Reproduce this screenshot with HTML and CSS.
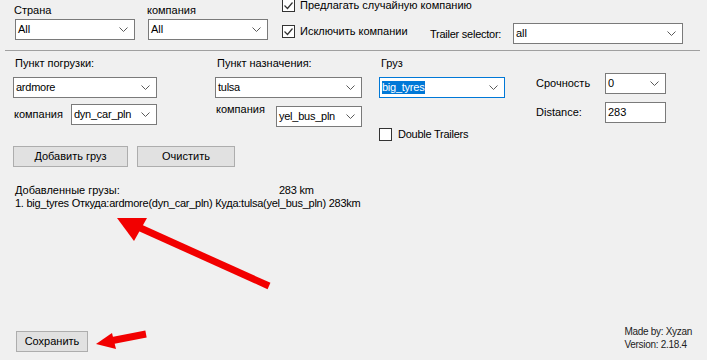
FILE: index.html
```html
<!DOCTYPE html>
<html lang="ru">
<head>
    <meta charset="UTF-8">
    <title>Cargo editor</title>
    <link rel="stylesheet" href="styles.css">
</head>
<body>
    <div class="form">
        <!-- Filters -->
        <div class="filters">
            <div class="field field-country">
                <span class="label">Страна</span>
                <div class="combo w120"><span class="value">All</span><svg class="chevron" width="9" height="5"><polyline points="0.5,0.5 4.5,4.5 8.5,0.5"/></svg></div>
            </div>
            <div class="field field-company">
                <span class="label">компания</span>
                <div class="combo w120"><span class="value">All</span><svg class="chevron" width="9" height="5"><polyline points="0.5,0.5 4.5,4.5 8.5,0.5"/></svg></div>
            </div>
            <div class="options">
                <div class="check check-random"><span class="box"><svg width="11" height="11"><polyline points="1.5,5.5 4.5,8.5 9.5,2.5"/></svg></span>Предлагать случайную компанию</div>
                <div class="options-row">
                    <div class="check check-exclude"><span class="box"><svg width="11" height="11"><polyline points="1.5,5.5 4.5,8.5 9.5,2.5"/></svg></span>Исключить компании</div>
                    <span class="label trailer-label lat">Trailer selector:</span>
                    <div class="combo w170"><span class="value">all</span><svg class="chevron" width="9" height="5"><polyline points="0.5,0.5 4.5,4.5 8.5,0.5"/></svg></div>
                </div>
            </div>
        </div>

        <div class="separator"></div>

        <!-- Cargo -->
        <div class="cargo">
            <div class="route route-from">
                <span class="label">Пункт погрузки:</span>
                <div class="combo w144"><span class="value lat">ardmore</span><svg class="chevron" width="9" height="5"><polyline points="0.5,0.5 4.5,4.5 8.5,0.5"/></svg></div>
                <div class="company-row">
                    <span class="label">компания</span>
                    <div class="combo w86"><span class="value lat">dyn_car_pln</span><svg class="chevron" width="9" height="5"><polyline points="0.5,0.5 4.5,4.5 8.5,0.5"/></svg></div>
                </div>
            </div>
            <div class="route route-to">
                <span class="label">Пункт назначения:</span>
                <div class="combo w147"><span class="value lat">tulsa</span><svg class="chevron" width="9" height="5"><polyline points="0.5,0.5 4.5,4.5 8.5,0.5"/></svg></div>
                <div class="company-row company-row-to">
                    <span class="label">компания</span>
                    <div class="combo w86"><span class="value lat">yel_bus_pln</span><svg class="chevron" width="9" height="5"><polyline points="0.5,0.5 4.5,4.5 8.5,0.5"/></svg></div>
                </div>
            </div>
            <div class="goods">
                <span class="label">Груз</span>
                <div class="combo combo-focus w126"><span class="value selected lat">big_tyres</span><svg class="chevron" width="9" height="5"><polyline points="0.5,0.5 4.5,4.5 8.5,0.5"/></svg></div>
                <div class="check check-empty lat"><span class="box"></span>Double Trailers</div>
            </div>
            <div class="params">
                <span class="label">Срочность</span>
                <div class="combo w61"><span class="value">0</span><svg class="chevron" width="9" height="5"><polyline points="0.5,0.5 4.5,4.5 8.5,0.5"/></svg></div>
                <span class="label">Distance:</span>
                <div class="textbox w61">283</div>
            </div>
        </div>

        <div class="actions">
            <button class="btn btn-add">Добавить груз</button>
            <button class="btn btn-clear">Очистить</button>
        </div>

        <div class="summary">
            <div class="summary-head"><span class="summary-title">Добавленные грузы:</span><span class="lat">283 km</span></div>
            <div class="lat">1. big_tyres Откуда:ardmore(dyn_car_pln) Куда:tulsa(yel_bus_pln) 283km</div>
        </div>

        <div class="footer">
            <button class="btn btn-save">Сохранить</button>
            <div class="credits">
                <div>Made by: Xyzan</div>
                <div>Version: 2.18.4</div>
            </div>
        </div>

        <!-- annotation arrows -->
        <svg class="arrows" width="707" height="360">
            <line x1="269" y1="286" x2="136" y2="226"/>
            <polygon points="117,218 147,218 134,241"/>
            <line x1="146" y1="334" x2="110" y2="341"/>
            <polygon points="96,344 112,333 116,349"/>
        </svg>
    </div>
</body>
</html>
```

FILE: styles.css
```css
/* Base */
* {
    margin: 0;
    padding: 0;
    box-sizing: border-box;
}

body {
    background: #f0f0f0;
    color: #000;
    font-family: 'Liberation Sans', Arial, sans-serif;
    font-size: 11px;
    line-height: 13px;
}

.form {
    position: relative;
    width: 707px;
    height: 360px;
    display: flex;
    flex-direction: column;
    overflow: hidden;
}

.label {
    display: block;
    white-space: nowrap;
}

/* latin strings run a bit narrower in the original font */
.lat {
    letter-spacing: -0.25px;
}

/* Combo boxes */
.combo {
    display: flex;
    align-items: center;
    justify-content: space-between;
    height: 21px;
    background: #fff;
    border: 1px solid #7a7a7a;
    padding: 0 6px 0 2px;
}

.combo .value {
    white-space: nowrap;
}

.combo .chevron {
    flex-shrink: 0;
    fill: none;
    stroke: #5a5a5a;
    stroke-width: 1;
}

.combo-focus {
    border-color: #0078d7;
}

.combo .selected {
    background: #0078d7;
    color: #fff;
    padding-right: 1px;
}

.textbox {
    height: 21px;
    background: #fff;
    border: 1px solid #7a7a7a;
    padding: 3px 2px 0;
}

.w61 { width: 61px; }
.w86 { width: 86px; }
.w120 { width: 120px; }
.w126 { width: 126px; }
.w144 { width: 144px; }
.w147 { width: 147px; }
.w170 { width: 170px; }

/* Checkboxes */
.check {
    display: flex;
    align-items: center;
    gap: 5px;
    white-space: nowrap;
}

.check .box {
    width: 13px;
    height: 13px;
    background: #fff;
    border: 1px solid #333;
    flex-shrink: 0;
}

.check .box svg {
    display: block;
    fill: none;
    stroke: #333;
    stroke-width: 1.2;
}

/* Filters */
.filters {
    display: flex;
    align-items: flex-start;
    padding: 4px 0 0 14px;
    height: 50px;
}

.field .combo {
    margin-top: 2px;
    margin-left: 1px;
}

.field-company {
    margin-left: 12px;
}

.options {
    margin: -5px 0 0 14px;
}

.options-row {
    display: flex;
    align-items: flex-start;
    margin-top: 11px;
}

.check-exclude {
    width: 148px;
    margin-top: 2px;
}

.trailer-label {
    width: 83px;
    margin-top: 5px;
}

.separator {
    height: 1px;
    background: #a0a0a0;
    margin: 0 7px 0 5px;
}

/* Cargo block */
.cargo {
    display: flex;
    align-items: flex-start;
    padding: 6px 0 0 13px;
    height: 95px;
}

.route > .label,
.goods > .label {
    margin-left: 2px;
}

.route > .combo,
.goods > .combo {
    margin-top: 7px;
}

.company-row {
    display: flex;
    align-items: center;
    margin-top: 6px;
}

.company-row .label {
    width: 58px;
    padding-left: 1px;
}

.route-to {
    margin-left: 58px;
}

.company-row-to {
    align-items: flex-start;
    margin-top: 8px;
}

.company-row-to .label {
    width: 61px;
    margin-top: -3px;
}

.goods {
    margin-left: 17px;
}

.check-empty {
    margin-top: 30px;
    gap: 6px;
}

.params {
    display: grid;
    grid-template-columns: 69px 61px;
    align-items: center;
    row-gap: 8px;
    margin: 16px 0 0 31px;
}

/* Buttons */
.btn {
    height: 21px;
    background: #e1e1e1;
    border: 1px solid #adadad;
    font: inherit;
    color: #000;
}

.actions {
    display: flex;
    gap: 9px;
    padding-left: 13px;
}

.btn-add { width: 115px; }
.btn-clear { width: 98px; }

.summary {
    margin: 17px 0 0 15px;
}

.summary-head {
    display: flex;
}

.summary-title {
    width: 264px;
}

/* Footer */
.footer {
    margin-top: auto;
    display: flex;
    align-items: flex-end;
    justify-content: space-between;
    padding: 0 15px 8px 16px;
}

.btn-save { width: 72px; }

.credits {
    font-size: 10px;
    line-height: 13px;
    letter-spacing: -0.3px;
    color: #222;
    margin-bottom: 1px;
}

/* Annotation overlay */
.arrows {
    position: absolute;
    top: 0;
    left: 0;
    pointer-events: none;
}

.arrows line {
    stroke: #f20000;
    stroke-width: 7;
}

.arrows polygon {
    fill: #f20000;
}
```
